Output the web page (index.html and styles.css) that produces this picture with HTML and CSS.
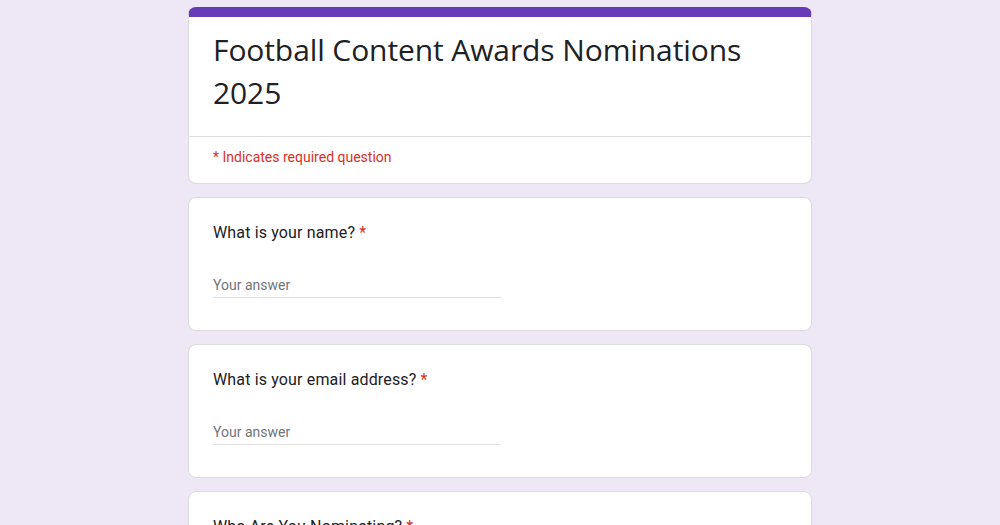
FILE: index.html
```html
<!DOCTYPE html>
<html lang="en">
<head>
<meta charset="utf-8">
<title>Football Content Awards Nominations 2025</title>
<link rel="stylesheet" href="styles.css">
</head>
<body>
<main class="form">
  <section class="card header-card">
    <div class="title-block">
      <h1 class="title">Football Content Awards Nominations 2025</h1>
    </div>
    <div class="required-note">* Indicates required question</div>
  </section>

  <section class="card question">
    <div class="q-label">What is your name? <span class="star">*</span></div>
    <div class="answer">Your answer</div>
  </section>

  <section class="card question">
    <div class="q-label">What is your email address? <span class="star">*</span></div>
    <div class="answer">Your answer</div>
  </section>

  <section class="card question">
    <div class="q-label">Who Are You Nominating? <span class="star">*</span></div>
    <div class="answer">Your answer</div>
  </section>
</main>
</body>
</html>
```

FILE: styles.css
```css
html, body {
  margin: 0;
  padding: 0;
  background: #ede7f6;
  font-family: Roboto, "Liberation Sans", Arial, sans-serif;
  color: #202124;
}

.form {
  width: 624px;
  margin: 7px auto 0;
  display: flex;
  flex-direction: column;
  gap: 13px;
}

.card {
  background: #ffffff;
  border: 1px solid #dadce0;
  border-radius: 8px;
}

.header-card {
  border-top: 10px solid #673ab7;
}

.title-block {
  padding: 11px 24px 22px;
  border-bottom: 1px solid #dadce0;
}

.title {
  margin: 0;
  font-family: "Open Sans", Roboto, sans-serif;
  font-weight: 400;
  font-size: 30px;
  line-height: 43px;
  color: #202124;
  letter-spacing: -0.1px;
}

.required-note {
  padding: 10px 24px 16px;
  font-size: 14px;
  line-height: 20px;
  color: #d93025;
}

.question {
  padding: 23px 24px 32px;
}

.q-label {
  font-size: 16px;
  line-height: 24px;
  letter-spacing: 0.15px;
  color: #202124;
}

.star {
  color: #d93025;
}

.answer {
  margin-top: 30px;
  width: 288px;
  font-size: 14px;
  line-height: 20px;
  color: #70757a;
  padding-bottom: 2px;
  border-bottom: 1px solid #e0e0e0;
}
```
